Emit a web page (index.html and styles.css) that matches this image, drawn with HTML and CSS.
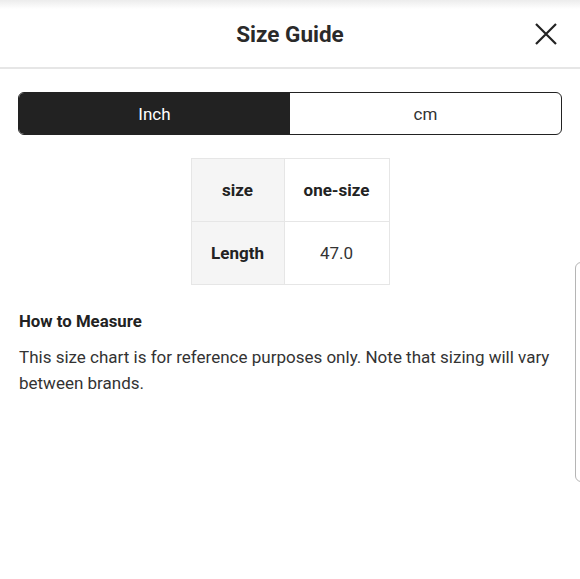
FILE: index.html
```html
<!DOCTYPE html>
<html>
<head>
<meta charset="utf-8">
<link rel="stylesheet" href="styles.css">
</head>
<body>
<div class="page">
  <header class="header">
    <h1 class="title">Size Guide</h1>
    <button class="close" aria-label="Close">
      <svg width="24" height="24" viewBox="0 0 24 24"><path d="M2 2 L22 22 M22 2 L2 22" stroke="#222" stroke-width="2.2" fill="none"/></svg>
    </button>
  </header>
  <main class="content">
    <div class="toggle">
      <div class="opt active">Inch</div>
      <div class="opt">cm</div>
    </div>
    <table class="chart">
      <tr><th>size</th><td class="bold">one-size</td></tr>
      <tr><th>Length</th><td>47.0</td></tr>
    </table>
    <h2 class="subhead">How to Measure</h2>
    <p class="desc">This size chart is for reference purposes only. Note that sizing will vary between brands.</p>
  </main>
  <div class="edge"></div>
</div>
</body>
</html>
```
FILE: styles.css
```css
* { box-sizing: border-box; }
html, body { margin: 0; padding: 0; background: #fff; }
body { font-family: Roboto, "Liberation Sans", Arial, sans-serif; color: #222; }
.page { position: relative; width: 580px; height: 579px; overflow: hidden; }
.header {
  height: 69px;
  border-bottom: 2px solid #e6e6e6;
  display: flex; align-items: center; justify-content: center;
  position: relative;
  background: linear-gradient(#ececec 0, #fff 9px);
}
.title { margin: 0; font-size: 22.5px; font-weight: 700; color: #2a2a2a; }
.close {
  position: absolute; right: 22px; top: 22px;
  width: 24px; height: 24px; padding: 0; border: 0; background: none;
}
.close svg { display: block; }
.content { padding: 23px 18px 0 18px; }
.toggle {
  display: flex; height: 43px;
  border: 1.5px solid #222; border-radius: 6px; overflow: hidden;
}
.opt { flex: 1; display: flex; align-items: center; justify-content: center; font-size: 17px; color: #333; }
.opt.active { background: #222; color: #fff; }
.chart { margin: 23px auto 0; border-collapse: collapse; }
.chart th, .chart td {
  border: 1px solid #e6e6e6; height: 63px; font-size: 17px; text-align: center; padding: 0;
}
.chart th { width: 93px; background: #f5f5f5; font-weight: 700; }
.chart td { width: 105px; font-weight: 400; color: #333; }
.chart td.bold { font-weight: 700; color: #222; }
.subhead { margin: 26px 0 0 1px; font-size: 16.8px; font-weight: 700; color: #222; }
.desc { margin: 13px 0 0 1px; font-size: 17px; line-height: 26px; color: #333; }
.edge {
  position: absolute; left: 575px; top: 262px; width: 20px; height: 220px;
  border: 1px solid #b5b5b5; border-radius: 6px;
}
```
